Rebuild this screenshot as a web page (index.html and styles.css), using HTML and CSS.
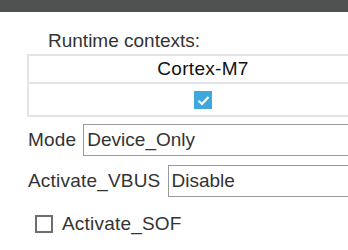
FILE: index.html
```html
<!DOCTYPE html>
<html lang="en">
<head>
    <meta charset="UTF-8">
    <title>USB Settings</title>
    <link rel="stylesheet" href="styles.css">
</head>
<body>
    <div class="topbar"></div>

    <div class="panel">
        <div class="ctx-title">Runtime contexts:</div>
        <table class="ctx-table">
            <tr>
                <td class="ctx-name">Cortex-M7</td>
            </tr>
            <tr>
                <td class="ctx-check">
                    <span class="check checked">
                        <svg width="13" height="11" viewBox="0 0 13 11"><path d="M1.5 5.8 L5 9 L11.5 2" fill="none" stroke="#fff" stroke-width="2.2"/></svg>
                    </span>
                </td>
            </tr>
        </table>

        <div class="field">
            <label class="field-label">Mode</label>
            <input class="field-input" type="text" value="Device_Only">
        </div>
        <div class="field">
            <label class="field-label">Activate_VBUS</label>
            <input class="field-input" type="text" value="Disable">
        </div>
        <div class="option">
            <span class="check"></span>
            <span class="option-label">Activate_SOF</span>
        </div>
    </div>
</body>
</html>
```

FILE: styles.css
```css
body {
    margin: 0;
    background-color: #ffffff;
    color: #333;
    font-family: "Liberation Sans", Arial, sans-serif;
    font-size: 19px;
    overflow: hidden;
}

.topbar {
    height: 12px;
    background-color: #505151;
}

.panel {
    padding-left: 27px;
    width: 400px;
}

.ctx-title {
    margin-top: 18px;
    margin-left: 21px;
    line-height: 22px;
}

.ctx-table {
    width: 352px;
    margin-top: 2px;
    border-collapse: collapse;
    border: 2px solid #e1e5e8;
}

.ctx-table td {
    border: 2px solid #e1e5e8;
    padding: 0;
    text-align: center;
}

.ctx-name {
    height: 26px;
    color: #111;
    letter-spacing: 0.3px;
}

.ctx-check {
    height: 31px;
}

.check {
    display: inline-flex;
    align-items: center;
    justify-content: center;
    box-sizing: border-box;
    width: 18px;
    height: 18px;
    border: 2px solid #6e6e6e;
    background-color: #fff;
    vertical-align: middle;
}

.check.checked {
    border: none;
    background-color: #3ea8dc;
}

.field {
    display: flex;
    align-items: center;
    margin-top: 7px;
}

.field + .field {
    margin-top: 9px;
}

.field-label {
    padding-left: 1px;
    margin-right: 7px;
    letter-spacing: 0.2px;
    white-space: nowrap;
}

.field-input {
    box-sizing: border-box;
    height: 32px;
    width: 300px;
    border: 1px solid #999;
    padding: 0 3px;
    font-family: inherit;
    font-size: 19px;
    color: #333;
    outline: none;
}

.option {
    display: flex;
    align-items: center;
    margin-top: 16px;
    margin-left: 8px;
}

.option-label {
    margin-left: 9px;
    letter-spacing: 0.2px;
}
```
